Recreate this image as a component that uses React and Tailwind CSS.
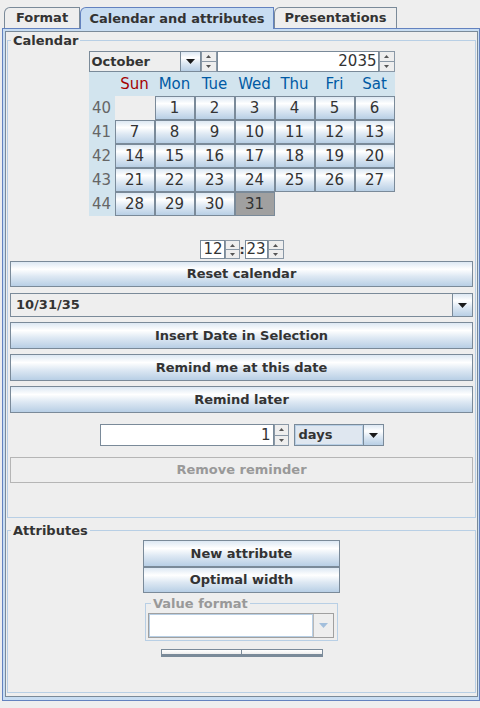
import clsx from "clsx";

const GRAD =
  "bg-[linear-gradient(to_bottom,#dde8f3_0%,#ffffff_30%,#dde8f3_60%,#b8cfe5_100%)]";

const WEEKS = [
  { no: 40, days: [null, 1, 2, 3, 4, 5, 6] },
  { no: 41, days: [7, 8, 9, 10, 11, 12, 13] },
  { no: 42, days: [14, 15, 16, 17, 18, 19, 20] },
  { no: 43, days: [21, 22, 23, 24, 25, 26, 27] },
  { no: 44, days: [28, 29, 30, 31, null, null, null] },
];

const DAY_NAMES = ["Sun", "Mon", "Tue", "Wed", "Thu", "Fri", "Sat"];

function Tri({ up, color = "#555555" }) {
  return (
    <svg width="5" height="3" viewBox="0 0 5 3">
      <path d={up ? "M0 3 L2.5 0 L5 3 Z" : "M0 0 L5 0 L2.5 3 Z"} fill={color} />
    </svg>
  );
}

function Spin({ className }) {
  return (
    <div className={clsx("flex h-full flex-col", className)}>
      <div className="flex flex-1 items-center justify-center border border-[#8a98a6] bg-[#eeeeee]">
        <Tri up />
      </div>
      <div className="flex flex-1 items-center justify-center border border-t-0 border-[#8a98a6] bg-[#eeeeee]">
        <Tri />
      </div>
    </div>
  );
}

function ArrowBtn({ disabled }) {
  return (
    <div
      className={clsx(
        "flex h-full w-[20px] shrink-0 items-center justify-center border-l",
        disabled ? "border-[#b8b8b8] bg-[#eeeeee]" : clsx("border-[#7a8a99]", GRAD),
      )}
    >
      <svg width="9" height="5" viewBox="0 0 9 5">
        <path d="M0 0 L9 0 L4.5 5 Z" fill={disabled ? "#a3bfdc" : "#1a1a1a"} />
      </svg>
    </div>
  );
}

function Btn({ children, className, disabled }) {
  return (
    <button
      type="button"
      className={clsx(
        "flex items-center justify-center border text-[13px] font-bold",
        disabled
          ? "border-[#b5b5b5] bg-[#eeeeee] text-[#999999]"
          : clsx("border-[#7a8a99] text-[#333333]", GRAD),
        className,
      )}
    >
      {children}
    </button>
  );
}

function Legend({ children, muted }) {
  return (
    <legend
      className={clsx(
        "ml-[3px] px-[2px] text-[13px] font-bold leading-[15px]",
        muted ? "text-[#999999]" : "text-[#333333]",
      )}
    >
      {children}
    </legend>
  );
}

function Tab({ label, selected, className }) {
  return (
    <div
      className={clsx(
        "flex items-center justify-center rounded-tl-[6px] border border-b-0 text-[13px] font-bold text-[#333333]",
        selected
          ? "relative z-10 h-[22px] border-[#6382bf] bg-[#c8ddf2]"
          : "h-[21px] border-[#7a8a99] bg-[#eeeeee]",
        className,
      )}
    >
      {label}
    </div>
  );
}

function CalendarGrid() {
  return (
    <div className="grid w-[306px] grid-cols-[26px_repeat(7,40px)] grid-rows-[repeat(6,24px)] bg-[#d2e4ee] text-[15px]">
      <div />
      {DAY_NAMES.map((d, i) => (
        <div
          key={d}
          className={clsx(
            "flex items-center justify-center",
            i === 0 ? "text-[#a40000]" : "text-[#005aa4]",
          )}
        >
          {d}
        </div>
      ))}
      {WEEKS.map((w) => (
        <div key={w.no} className="contents">
          <div className="flex items-center justify-center text-[#666666]">{w.no}</div>
          {w.days.map((d, i) =>
            d === null ? (
              <div key={i} className="bg-[#eeeeee]" />
            ) : (
              <div
                key={i}
                className={clsx(
                  "flex items-center justify-center border border-[#7a8a99] text-[#333333]",
                  d === 31 ? "bg-[#a0a0a0]" : GRAD,
                )}
              >
                {d}
              </div>
            ),
          )}
        </div>
      ))}
    </div>
  );
}

export default function App() {
  return (
    <div className="h-[708px] w-[480px] overflow-hidden bg-[#eeeeee] font-['DejaVu_Sans',sans-serif] text-[#333333]">
      <div className="mt-[7px] flex h-[21px] items-start pl-[4px]">
        <Tab label="Format" className="w-[76px]" />
        <Tab label="Calendar and attributes" selected className="w-[194px]" />
        <Tab label="Presentations" className="w-[123px]" />
      </div>

      <div className="ml-[2px] h-[673px] w-[478px] border border-[#6382bf] bg-[#c8ddf2] pb-[3px] pl-[2px] pr-[1px] pt-[2px]">
        <div className="h-full border border-[#7a8a99] bg-[#eeeeee] px-[1px] pt-[1px]">
          <fieldset className="h-[485px] border border-[#b8cfe5]">
            <Legend>Calendar</Legend>
            <div className="flex flex-col px-[2px]">
              <div className="mt-[3px] flex h-[21px] w-[306px] self-center">
                <div className="flex w-[112px] items-center border border-[#7a8a99] bg-[#eeeeee]">
                  <span className="flex-1 pl-[2px] text-[13px] font-bold">October</span>
                  <ArrowBtn />
                </div>
                <Spin className="w-[16px]" />
                <div className="flex flex-1 items-center justify-end border border-[#7a8a99] bg-white pr-[1px] text-[15px]">
                  2035
                </div>
                <Spin className="w-[16px]" />
              </div>

              <div className="self-center">
                <CalendarGrid />
              </div>

              <div className="mt-[24px] flex h-[19px] self-center">
                <div className="flex w-[25px] items-center justify-end border border-[#7a8a99] bg-white pr-[1px] text-[15px]">
                  12
                </div>
                <Spin className="w-[15px]" />
                <div className="flex w-[5px] items-center justify-center text-[13px] font-bold">:</div>
                <div className="flex w-[23px] items-center justify-end border border-[#7a8a99] bg-white pr-[1px] text-[15px]">
                  23
                </div>
                <Spin className="w-[16px]" />
              </div>

              <Btn className="mt-[2px] h-[26px]">Reset calendar</Btn>

              <div className="mt-[6px] flex h-[24px] items-center border border-[#7a8a99] bg-[#eeeeee]">
                <span className="flex-1 pl-[5px] text-[13px] font-bold">10/31/35</span>
                <ArrowBtn />
              </div>

              <Btn className="mt-[5px] h-[27px]">Insert Date in Selection</Btn>
              <Btn className="mt-[5px] h-[27px]">Remind me at this date</Btn>
              <Btn className="mt-[5px] h-[27px]">Remind later</Btn>

              <div className="mt-[11px] flex h-[22px] self-center">
                <div className="flex w-[174px] items-center justify-end border border-[#7a8a99] bg-white pr-[2px] text-[15px]">
                  1
                </div>
                <Spin className="w-[15px]" />
                <div className="ml-[5px] flex w-[90px] items-center border border-[#7a8a99] bg-[#dfe7f0]">
                  <span className="flex h-full flex-1 items-center border border-[#b8cfe5] pl-[3px] text-[13px] font-bold">
                    days
                  </span>
                  <ArrowBtn />
                </div>
              </div>

              <Btn disabled className="mt-[11px] h-[26px]">
                Remove reminder
              </Btn>
            </div>
          </fieldset>

          <fieldset className="mt-[5px] h-[170px] border border-[#b8cfe5]">
            <Legend>Attributes</Legend>
            <div className="flex flex-col items-center">
              <Btn className="mt-[2px] h-[27px] w-[197px]">New attribute</Btn>
              <Btn className="h-[26px] w-[197px]">Optimal width</Btn>

              <fieldset className="mt-[3px] w-[193px] border border-[#b8cfe5] pb-[2px] pl-[2px] pr-[3px]">
                <Legend muted>Value format</Legend>
                <div className="mt-[2px] flex h-[25px] border border-[#a0a0a0]">
                  <div className="flex-1 border border-[#b8cfe5] bg-white" />
                  <ArrowBtn disabled />
                </div>
              </fieldset>

              <div className="mt-[8px] flex w-[162px]">
                <div className="h-[8px] flex-1 border border-b-[3px] border-[#7a8a99] bg-[linear-gradient(to_bottom,#ffffff,#eeeeee)]" />
                <div className="h-[8px] flex-1 border border-b-[3px] border-l-0 border-[#7a8a99] bg-[linear-gradient(to_bottom,#ffffff,#eeeeee)]" />
              </div>
            </div>
          </fieldset>
        </div>
      </div>
    </div>
  );
}
